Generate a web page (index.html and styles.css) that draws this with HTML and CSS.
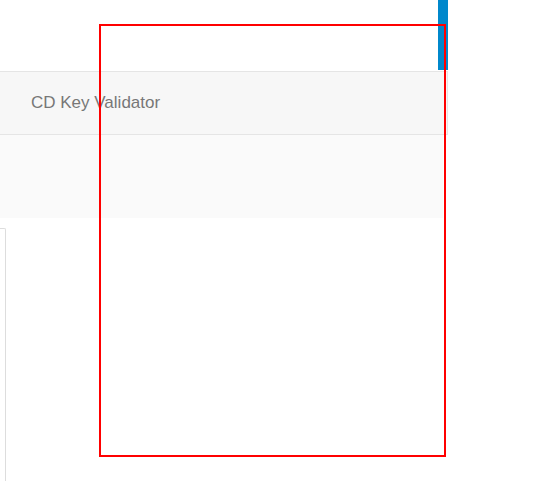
FILE: index.html
```html
<!DOCTYPE html>
<html>
<head>
<meta charset="utf-8">
<link rel="stylesheet" href="styles.css">
</head>
<body>
<div class="page">
  <div class="top"><div class="accent"></div></div>
  <nav class="navbar"><span class="brand">CD Key Validator</span></nav>
  <div class="band"></div>
  <div class="panel"></div>
</div>
<div class="highlight"></div>
</body>
</html>
```
FILE: styles.css
```css
html, body {
  margin: 0;
  padding: 0;
  background: #ffffff;
  font-family: "Liberation Sans", Arial, sans-serif;
  overflow: hidden;
}
.page {
  width: 448px;
  height: 481px;
  display: flex;
  flex-direction: column;
}
.top {
  height: 71px;
  display: flex;
  justify-content: flex-end;
}
.accent {
  width: 10px;
  height: 70px;
  background: #0088cc;
}
.navbar {
  box-sizing: border-box;
  height: 64px;
  width: 448px;
  background: #f7f7f7;
  border: 1px solid #e5e5e5;
  border-left: none;
  display: flex;
  align-items: center;
  padding-left: 31px;
}
.brand {
  font-size: 17px;
  color: #777777;
  line-height: 20px;
}
.band {
  width: 443px;
  height: 83px;
  background: #fafafa;
}
.panel {
  margin-top: 10px;
  width: 5px;
  flex: 1;
  border-top: 1px solid #dddddd;
  border-right: 1px solid #dddddd;
  border-top-right-radius: 2px;
}
.highlight {
  position: absolute;
  left: 99px;
  top: 24px;
  width: 343px;
  height: 429px;
  border: 2px solid #ff0000;
}
```
